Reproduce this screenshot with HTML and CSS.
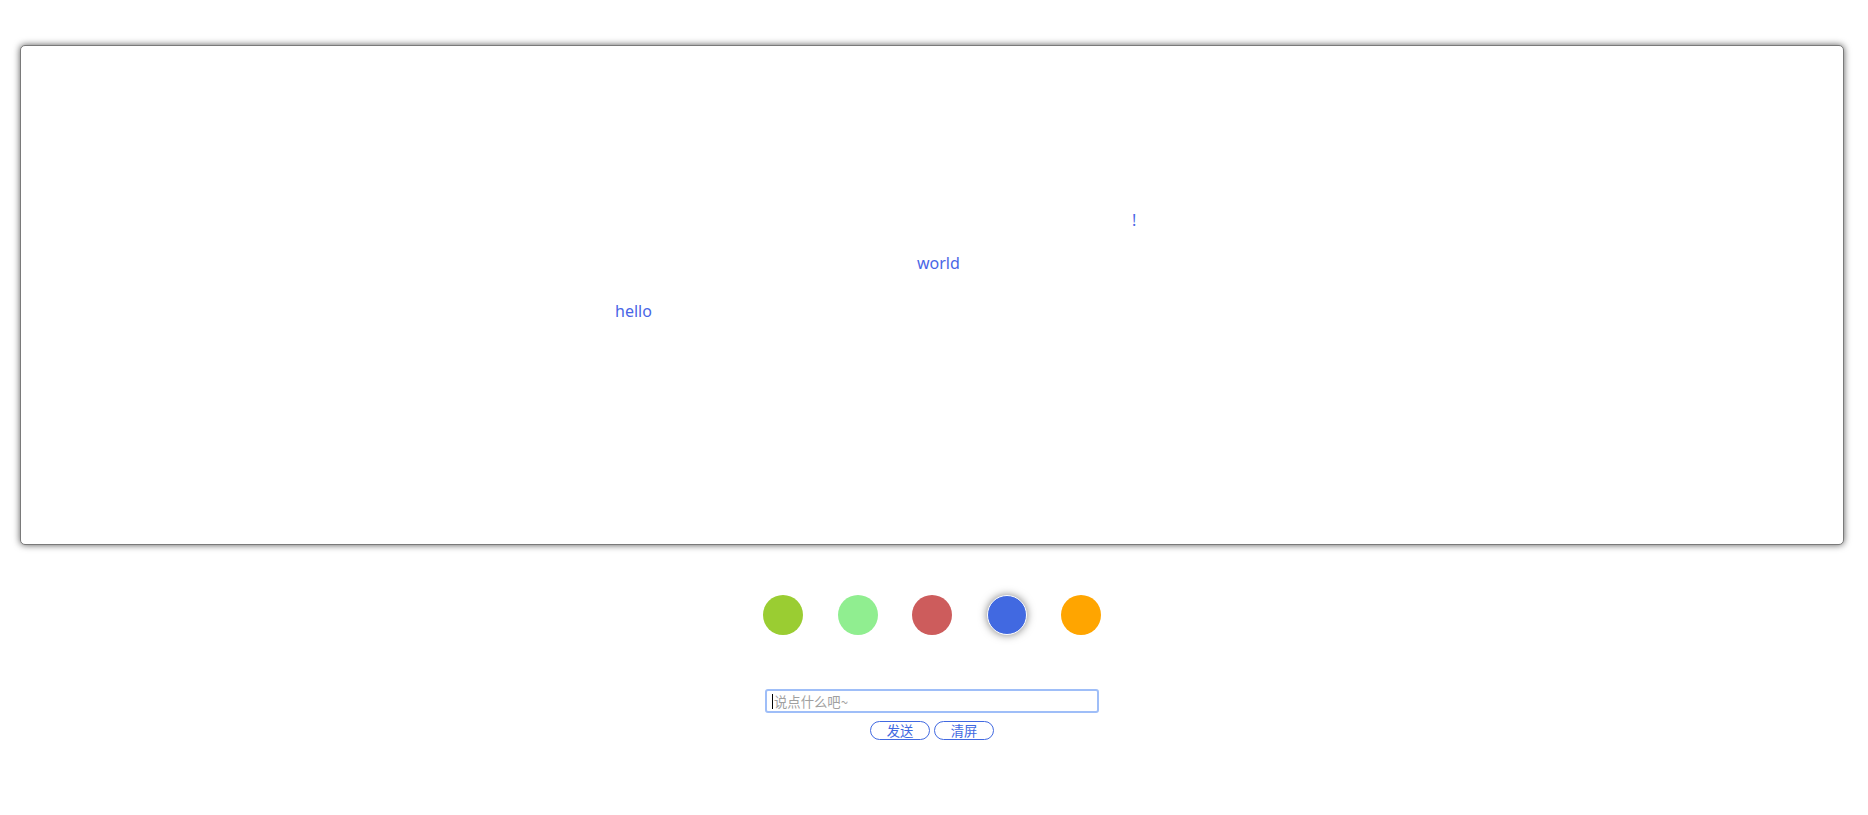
FILE: index.html
```html
<!DOCTYPE html>
<html lang="zh-CN">
<head>
<meta charset="utf-8">
<title>弹幕</title>
<link rel="stylesheet" href="styles.css">
</head>
<body>
<div class="page">
  <div class="screen">
    <span class="danmu" style="left:1111px;top:162px">!</span>
    <span class="danmu" style="left:896px;top:205px">world</span>
    <span class="danmu" style="left:594px;top:253px">hello</span>
  </div>
  <div class="controls">
    <div class="colors">
      <span class="dot dot-yellowgreen"></span>
      <span class="dot dot-lightgreen"></span>
      <span class="dot dot-indianred"></span>
      <span class="dot dot-royalblue active"></span>
      <span class="dot dot-orange"></span>
    </div>
    <div class="form">
      <div class="field">
        <input class="msg" type="text" placeholder="说点什么吧~">
        <span class="caret"></span>
      </div>
      <div class="buttons">
        <button class="btn">发送</button>
        <button class="btn">清屏</button>
      </div>
    </div>
  </div>
</div>
</body>
</html>
```

FILE: styles.css
```css
html, body {
  margin: 0;
  padding: 0;
  background: #fff;
}
body {
  font-family: "Noto Sans", "Noto Sans CJK SC", sans-serif;
}
.page {
  padding: 45px 24px 0 20px;
}
.screen {
  position: relative;
  height: 498px;
  border: 1px solid #7a7a7a;
  border-radius: 5px;
  box-shadow: 0 0 7px rgba(0, 0, 0, 0.65);
  overflow: hidden;
  background: #fff;
}
.danmu {
  position: absolute;
  white-space: nowrap;
  font-size: 16px;
  line-height: 24px;
  color: #4a66e6;
}
.controls {
  display: flex;
  flex-direction: column;
  align-items: center;
}
.colors {
  display: flex;
  gap: 34.5px;
  margin-top: 50px;
  height: 40px;
}
.dot {
  width: 40px;
  height: 40px;
  border-radius: 50%;
  box-sizing: border-box;
}
.dot-yellowgreen { background: #9acd32; }
.dot-lightgreen { background: #90ee90; }
.dot-indianred { background: #cd5c5c; }
.dot-royalblue { background: #4169e1; }
.dot-orange { background: #ffa500; }
.dot.active {
  border: 1.5px solid #fff;
  box-shadow: 0 0 8px rgba(0, 0, 0, 0.5);
}
.form {
  display: flex;
  flex-direction: column;
  align-items: center;
  margin-top: 54px;
}
.field {
  position: relative;
}
.msg {
  display: block;
  box-sizing: border-box;
  width: 334px;
  height: 24px;
  padding: 0 7px;
  border: 2px solid #9fbef8;
  border-radius: 3px;
  outline: none;
  font-family: "Noto Sans CJK SC", sans-serif;
  font-size: 13.333px;
  color: #222;
}
.msg::placeholder {
  color: #a0a0a0;
}
.caret {
  position: absolute;
  left: 7px;
  top: 5px;
  width: 1px;
  height: 15px;
  background: #000;
}
.buttons {
  display: flex;
  gap: 4px;
  margin-top: 8px;
}
.btn {
  box-sizing: border-box;
  width: 60px;
  height: 19px;
  padding: 0;
  border: 1px solid #4169e1;
  border-radius: 10px;
  background: #fff;
  color: #4169e1;
  font-family: "Noto Sans CJK SC", sans-serif;
  font-size: 13.333px;
  line-height: 17px;
}
```
